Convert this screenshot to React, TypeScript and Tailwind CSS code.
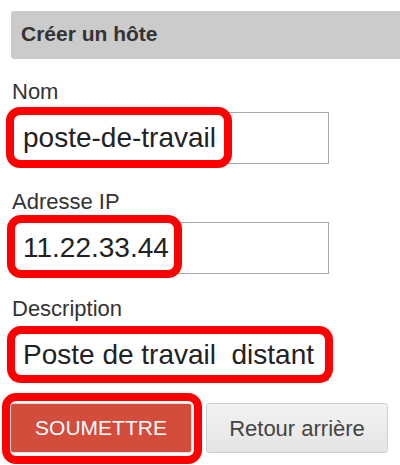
import React from "react";

type Box = { left: number; top: number; width: number; height: number };

// red annotation frame drawn over a field
function Mark({ box }: { box: Box }) {
  return (
    <div
      className="pointer-events-none absolute rounded-[14px] border-[8px] border-[#ff0000]"
      style={{ left: box.left, top: box.top, width: box.width, height: box.height }}
    />
  );
}

function Field({
  label,
  value,
  mark,
  className,
}: {
  label: string;
  value: string;
  mark: Box;
  className?: string;
}) {
  return (
    <div className={className}>
      <label className="block ml-[12px] text-[22px] leading-[25px] text-[#333]">{label}</label>
      <div className="relative ml-[12px] mt-[8px] w-[317px] h-[52px]">
        <input
          readOnly
          defaultValue={value}
          className="w-full h-full border border-[#a9a9a9] bg-white pl-[10px] text-[28px] text-[#222] outline-none"
        />
        <Mark box={mark} />
      </div>
    </div>
  );
}

export default function App() {
  return (
    <div className="w-[400px] h-[465px] overflow-hidden bg-white font-['Liberation_Sans',Arial,sans-serif]">
      <div className="ml-[11px] mt-[11px] h-[48px] flex items-center pl-[10px] pb-[3px] bg-[#cbcbcb] rounded-l-[3px]">
        <h2 className="text-[21px] font-bold text-[#333]">Créer un hôte</h2>
      </div>

      <Field
        className="mt-[20px]"
        label="Nom"
        value="poste-de-travail"
        mark={{ left: -6, top: -5, width: 226, height: 61 }}
      />
      <Field
        className="mt-[25px]"
        label="Adresse IP"
        value="11.22.33.44"
        mark={{ left: -5, top: -7, width: 175, height: 63 }}
      />
      <Field
        className="mt-[22px]"
        label="Description"
        value="Poste de travail  distant"
        mark={{ left: -5, top: -3, width: 326, height: 57 }}
      />

      <div className="mt-[22px] ml-[10px] flex gap-[14px]">
        <div className="relative">
          <button className="w-[182px] h-[50px] rounded-[3px] border border-[#dcdcdc] bg-[#d44c3c] text-[21px] text-white">
            SOUMETTRE
          </button>
          <Mark box={{ left: -8, top: -10, width: 200, height: 71 }} />
        </div>
        <button className="w-[182px] h-[50px] rounded-[3px] border border-[#d0d0d0] bg-gradient-to-b from-[#f3f3f3] to-[#e4e4e4] text-[22px] text-[#444]">
          Retour arrière
        </button>
      </div>
    </div>
  );
}
